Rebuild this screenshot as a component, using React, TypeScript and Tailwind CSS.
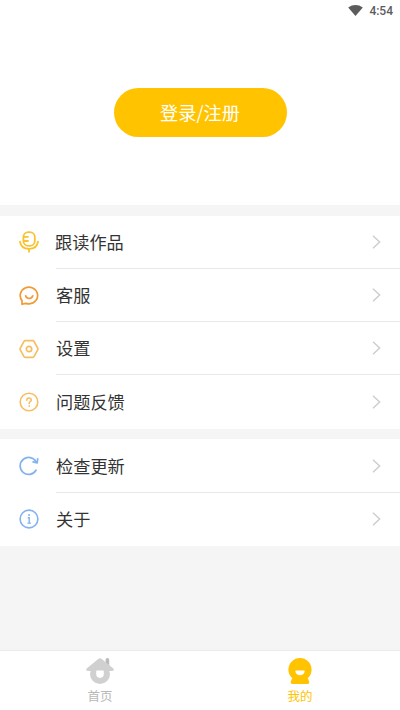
import type { ReactNode } from 'react';

interface MenuItem {
  id: string;
  label: string;
  icon: ReactNode;
}

const MicIcon = () => (
  <svg width="20" height="22" viewBox="0 0 20 22" fill="none" stroke="#f8c230" strokeWidth="1.8" strokeLinecap="round">
    <rect x="4.4" y="1.1" width="11.4" height="13.8" rx="5" />
    <path d="M5 5.8h4M5 10h4" />
    <path d="M1 10.6c.6 4.6 4.2 7.2 9 7.2s8.4-2.6 9-7.2M10 17.8v3" />
  </svg>
);

const ServiceIcon = () => (
  <svg width="20" height="20" viewBox="0 0 20 20" fill="none" stroke="#f29a35" strokeWidth="1.7" strokeLinecap="round" strokeLinejoin="round">
    <path d="M3 18.3V14.6A8.7 8.4 0 1 1 10.2 17.9C8.500 17.900 7.600 17.700 6.600 17.400Z" />
    <path d="M6.600 9.800c1.300 3.600 5.900 3.600 7.200 0" />
  </svg>
);

const SettingsIcon = () => (
  <svg width="20" height="20" viewBox="0 0 20 20" fill="none" stroke="#f7bd61" strokeWidth="1.7" strokeLinejoin="round">
    <path d="M6.200 1.700h7.600q.8 0 1.200.7l3.700 6.700q.5.900 0 1.800L15 17.600q-.4.700-1.200.7H6.200q-.8 0-1.200-.7L1.300 10.900q-.5-.9 0-1.800L5 2.400q.4-.7 1.200-.7Z" />
    <circle cx="10" cy="10" r="2.700" />
  </svg>
);

const FeedbackIcon = () => (
  <svg width="20" height="20" viewBox="0 0 20 20" fill="none" stroke="#f7bd61" strokeWidth="1.6" strokeLinecap="round">
    <circle cx="10" cy="10" r="8.8" />
    <path d="M7.800 8.200c0-2.900 4.500-2.900 4.500-.1 0 1.600-2.200 1.600-2.200 3.300" />
    <circle cx="10.1" cy="14" r=".4" strokeWidth="1" />
  </svg>
);

const UpdateIcon = () => (
  <svg width="20" height="20" viewBox="0 0 20 20" fill="none" stroke="#82b3ee" strokeWidth="1.7" strokeLinecap="round" strokeLinejoin="round">
    <path d="M17 14.200A8.500 8.500 0 1 1 17.200 6" />
    <path d="M18.700 2.800l-.5 4-4.100-.9" />
  </svg>
);

const AboutIcon = () => (
  <svg width="20" height="20" viewBox="0 0 20 20" fill="none" stroke="#82b3ee" strokeWidth="1.6">
    <circle cx="10" cy="10" r="8.9" />
    <path d="M8.700 8.700h1.500v5.200" strokeWidth="1.4" />
    <path d="M8.400 14.200h3.500" strokeWidth="1.2" />
    <circle cx="10" cy="5.9" r="1" fill="#82b3ee" stroke="none" />
  </svg>
);

const HomeIcon = () => (
  <svg width="28" height="26" viewBox="0 0 28 26" fill="#d0d0d0">
    <path d="M19.600 1.700Q19.600 0 21.400 0t1.800 1.700V8h-3.600Z" fill="#bababa" />
    <path d="M12.200.9Q14-.5 15.800.9L27.300 10.500q1.300 1.700-.8 2.500h-25q-2.100-.8-.8-2.500Z" />
    <circle cx="14" cy="16" r="10" />
    <path d="M11 12.400h6q.8 0 .8.800v2.900a3.800 3.800 0 0 1-7.600 0v-2.900q0-.8.800-.8Z" fill="#fff" />
  </svg>
);

const MineIcon = () => (
  <svg width="24" height="26" viewBox="0 0 24 26" fill="#ffc300">
    <circle cx="12" cy="11.6" r="11.6" />
    <path d="M5 19h14q2 2.900 2.200 5.300.1 1.700-1.400 1.700H4.200q-1.500 0-1.400-1.700Q3 21.900 5 19Z" />
    <path d="M7.900 12.600h8.200q.6 0 .6.700c-.5 5.300-8.900 5.300-9.400 0q0-.7.600-.7Z" fill="#fff" />
  </svg>
);

const ChevronIcon = () => (
  <svg width="9" height="14" viewBox="0 0 9 14" fill="none" stroke="#cecece" strokeWidth="1.5">
    <path d="M1 .8 7.600 7 1 13.200" />
  </svg>
);

const practiceItems: MenuItem[] = [
  { id: 'works', label: '跟读作品', icon: <MicIcon /> },
  { id: 'service', label: '客服', icon: <ServiceIcon /> },
  { id: 'settings', label: '设置', icon: <SettingsIcon /> },
  { id: 'feedback', label: '问题反馈', icon: <FeedbackIcon /> },
];

const appItems: MenuItem[] = [
  { id: 'update', label: '检查更新', icon: <UpdateIcon /> },
  { id: 'about', label: '关于', icon: <AboutIcon /> },
];

function MenuGroup({ items }: { items: MenuItem[] }) {
  return (
    <div className="bg-white">
      {items.map((item, index) => (
        <button key={item.id} className="flex h-[53.3px] w-full items-center pl-[19px] text-left">
          <span className="flex w-5 shrink-0 justify-center">{item.icon}</span>
          <span
            className={`ml-[17px] flex h-full flex-1 items-center justify-between pr-[19px] ${
              index < items.length - 1 ? 'border-b border-[#e8e8e8]' : ''
            }`}
          >
            <span className={`text-[17.2px] leading-6 text-[#333] ${index === 0 && items.length > 2 ? '-ml-px' : ''}`}>
              {item.label}
            </span>
            <ChevronIcon />
          </span>
        </button>
      ))}
    </div>
  );
}

export default function App() {
  return (
    <div className="flex h-[710px] w-[400px] flex-col overflow-hidden bg-[#f5f5f5] font-['Noto_Sans_CJK_SC',sans-serif]">
      {/* Status bar + login */}
      <div className="h-[205px] bg-white">
        <div className="flex h-[22px] items-center justify-end gap-[6px] pr-[7px]">
          <svg width="15" height="11" viewBox="0 0 16 12" fill="#5c5c5c" className="mb-[2px]">
            <path d="M0 2.700Q8-2.700 16 2.700L8 12Z" />
          </svg>
          <span className="font-[Roboto,sans-serif] text-[12px] leading-none font-medium text-[#5c5c5c]">4:54</span>
        </div>
        <div className="flex justify-center pt-[66px]">
          <button className="h-[49px] w-[173px] rounded-full bg-[#ffc300] text-[18.2px] text-white">登录/注册</button>
        </div>
      </div>

      {/* Menu */}
      <div className="flex flex-1 flex-col gap-[10.6px] pt-[10.6px]">
        <MenuGroup items={practiceItems} />
        <MenuGroup items={appItems} />
      </div>

      {/* Bottom tabs */}
      <div className="flex h-[60px] border-t border-[#ebebeb] bg-white">
        <button className="flex flex-1 flex-col items-center pt-[7px]">
          <HomeIcon />
          <span className="mt-[3px] text-[12.5px] leading-[18px] text-[#b8b8b8]">首页</span>
        </button>
        <button className="flex flex-1 flex-col items-center pt-[7px]">
          <MineIcon />
          <span className="mt-[3px] text-[12.5px] leading-[18px] text-[#ffc300]">我的</span>
        </button>
      </div>
    </div>
  );
}
